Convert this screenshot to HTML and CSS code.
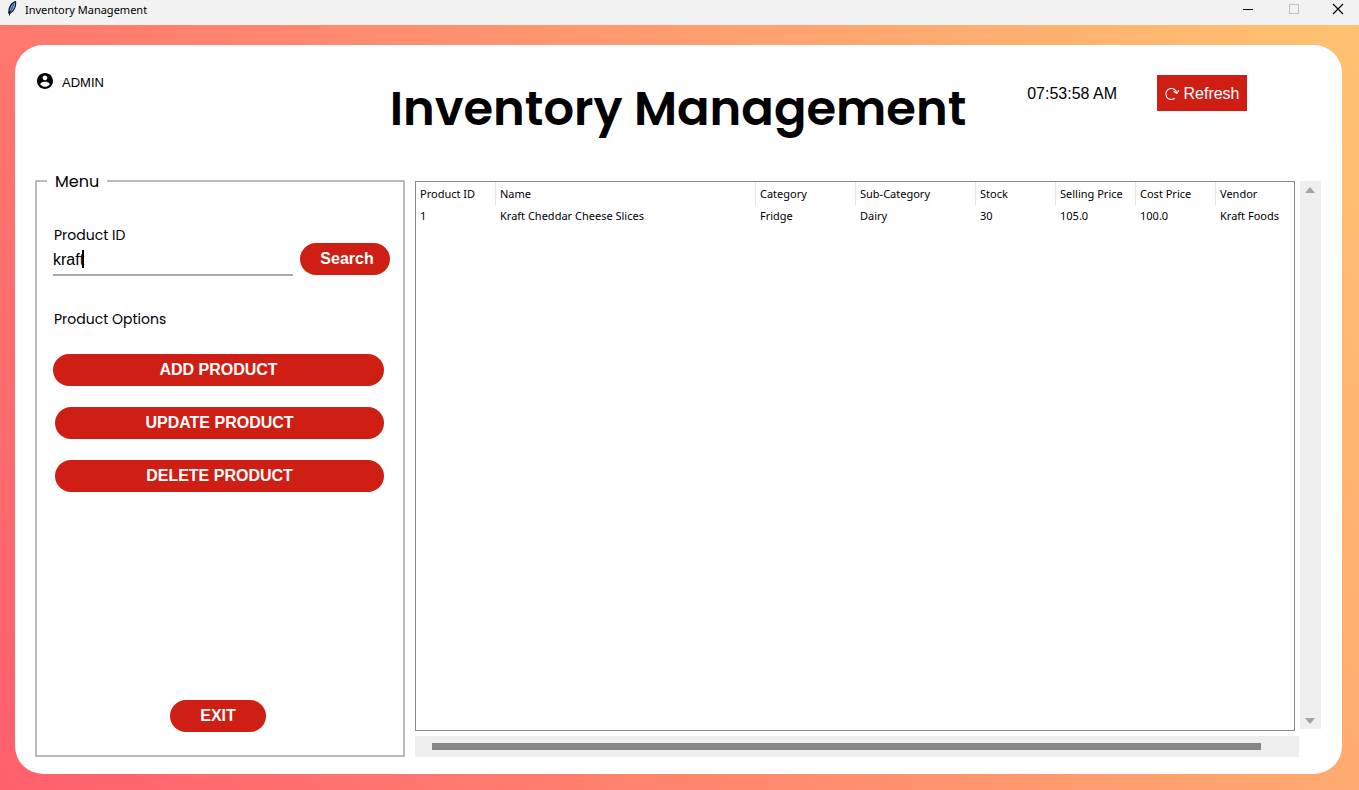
FILE: index.html
```html
<!DOCTYPE html>
<html lang="en">
<head>
<meta charset="utf-8">
<title>Inventory Management</title>
<link rel="stylesheet" href="styles.css">
</head>
<body>
<header class="titlebar">
  <svg class="feather" viewBox="0 0 10 18" aria-hidden="true">
    <path d="M9 1C5 1.500 1.500 6 1.500 10.500L1 13L2 14V16.500L3.500 13.500C7.500 11.500 10 6 9 1Z" fill="#0b1730"/>
    <path d="M8 2.200C5 4 3 7 2.600 11L4 12C7 9.500 8.600 6 8 2.200Z" fill="#7aa5d8"/>
    <path d="M7 4L3 12.500" stroke="#1d3a66" stroke-width=".8" fill="none"/>
  </svg>
  <span class="titlebar-text">Inventory Management</span>
  <div class="window-controls">
    <button class="window-btn" aria-label="Minimize"><svg viewBox="0 0 12 12"><path d="M1 6.500H11" stroke="#000"/></svg></button>
    <button class="window-btn" aria-label="Maximize" disabled><svg viewBox="0 0 12 12"><rect x="1.500" y="1.500" width="9" height="9" stroke="#c0c0c0" fill="none"/></svg></button>
    <button class="window-btn" aria-label="Close"><svg viewBox="0 0 12 12"><path d="M1 1L11 11M11 1L1 11" stroke="#000" stroke-width="1.200"/></svg></button>
  </div>
</header>
<main class="stage">
  <div class="card">
    <div class="card-head">
      <div class="user">
        <svg class="user-icon" viewBox="2 2 20 20" aria-hidden="true"><path d="M12 2C6.480 2 2 6.480 2 12s4.480 10 10 10 10-4.480 10-10S17.520 2 12 2zm0 3c1.660 0 3 1.340 3 3s-1.340 3-3 3-3-1.340-3-3 1.340-3 3-3zm0 14.200c-2.500 0-4.710-1.280-6-3.220.03-1.990 4-3.080 6-3.080 1.990 0 5.970 1.090 6 3.080-1.290 1.940-3.500 3.220-6 3.220z"/></svg>
        <span>ADMIN</span>
      </div>
      <h1 class="title">Inventory Management</h1>
      <div class="head-tools">
        <time class="clock">07:53:58 AM</time>
        <button class="refresh">
          <svg class="refresh-icon" viewBox="0 0 16 16" aria-hidden="true"><path d="M10.800 12.300A5.500 5.500 0 1 1 12.800 7.200M9.600 5.200L12.800 7.400L15 4.200" fill="none" stroke="#fff" stroke-width="1.100"/></svg>
          Refresh
        </button>
      </div>
    </div>
    <div class="content">
      <fieldset class="menu">
        <legend class="menu-legend">Menu</legend>
        <form class="search">
          <div class="field">
            <label class="label" for="product-id">Product ID</label>
            <input class="input" id="product-id" type="text" value="kraft">
          </div>
          <button class="pill pill-search" type="button">Search</button>
        </form>
        <h2 class="label options-label">Product Options</h2>
        <div class="options">
          <button class="pill pill-wide">ADD PRODUCT</button>
          <button class="pill">UPDATE PRODUCT</button>
          <button class="pill">DELETE PRODUCT</button>
        </div>
        <button class="pill pill-exit">EXIT</button>
      </fieldset>
      <section class="results">
        <div class="table-box">
          <table class="table">
            <colgroup><col class="w-first"><col class="w-name"><col class="w-cat"><col class="w-sub"><col class="w-m"><col class="w-m"><col class="w-m"><col class="w-last"></colgroup>
            <thead>
              <tr><th>Product ID</th><th>Name</th><th>Category</th><th>Sub-Category</th><th>Stock</th><th>Selling Price</th><th>Cost Price</th><th>Vendor</th></tr>
            </thead>
            <tbody>
              <tr><td>1</td><td>Kraft Cheddar Cheese Slices</td><td>Fridge</td><td>Dairy</td><td>30</td><td>105.0</td><td>100.0</td><td>Kraft Foods</td></tr>
            </tbody>
          </table>
        </div>
        <div class="scroll-y" aria-hidden="true"><span class="arrow-up"></span><span class="arrow-down"></span></div>
        <div class="scroll-x" aria-hidden="true"><span class="thumb"></span></div>
      </section>
    </div>
  </div>
</main>
</body>
</html>
```
FILE: styles.css
```css
* { box-sizing: border-box; }

body {
  margin: 0;
  min-height: 100vh;
  display: flex;
  flex-direction: column;
  font-family: "Liberation Sans", Arial, sans-serif;
  font-size: 16px;
  color: #000;
}

button { font: inherit; border: 0; padding: 0; cursor: pointer; }

.titlebar {
  height: 25px;
  display: flex;
  align-items: flex-start;
  background: #f2f2f2;
  padding-left: 7px;
}
.feather { width: 10px; height: 18px; }
.titlebar-text {
  margin-left: 8px;
  font: 11px/20px "Segoe UI", "Noto Sans", sans-serif;
}
.window-controls { margin-left: auto; display: flex; }
.window-btn { width: 46px; height: 18px; background: none; display: grid; place-items: center; }
.window-btn:last-child { width: 42px; }
.window-btn svg { width: 12px; height: 12px; }

.stage {
  flex: 1;
  display: flex;
  padding: 20px 17px 16px 15px;
  background: linear-gradient(60deg, #ff5f6d, #ffc371);
}
.card {
  flex: 1;
  display: flex;
  flex-direction: column;
  background: #fff;
  border-radius: 28px;
  padding: 0 21px 17px 20px;
}
.card-head {
  display: grid;
  grid-template-columns: 1fr auto 1fr;
  padding-top: 28px;
  height: 126px;
}
.user { display: flex; gap: 9px; padding-left: 2px; font-size: 13px; line-height: 20px; }
.user-icon { width: 16px; height: 16px; }
.title {
  margin: 0;
  font: 600 48px/72px Poppins, Inter, sans-serif;
  white-space: nowrap;
}
.head-tools { display: flex; justify-content: flex-end; align-items: flex-start; gap: 40px; padding: 2px 74px 0 0; }
.clock { line-height: 38px; }
.refresh {
  display: flex;
  align-items: center;
  justify-content: center;
  gap: 3px;
  width: 90px;
  height: 36px;
  padding-top: 2px;
  background: #cf1f14;
  color: #fff;
}
.refresh-icon { width: 16px; height: 16px; }

.content { flex: 1; display: flex; gap: 10px; }

.menu {
  display: flex;
  flex-direction: column;
  width: 370px;
  margin: 0;
  padding: 34px 13px 23px 16px;
  border: 2px solid #bbb;
}
.menu-legend { margin-left: -6px; padding: 2px 8px 0; font: 16px/18px Poppins, Inter, sans-serif; }
.search { display: flex; align-items: flex-end; justify-content: space-between; }
.field { display: flex; flex-direction: column; width: 240px; }
.label { margin: 0; padding-left: 1px; font: 14px/20px Poppins, Inter, sans-serif; }
.input {
  width: 100%;
  height: 31px;
  padding: 0;
  border: 0;
  border-bottom: 2px solid #aaa;
  outline: 0;
  font: inherit;
  background: linear-gradient(#000, #000) 29px 5px / 2px 18px no-repeat;
}
.pill {
  height: 32px;
  border-radius: 16px;
  background: #cf1f14;
  color: #fff;
  font-weight: 700;
}
.pill-search { width: 90px; margin-bottom: 1px; padding-left: 4px; }
.options-label { margin-top: 33px; }
.options { display: flex; flex-direction: column; gap: 21px; margin-top: 25px; padding: 0 6px 0 2px; }
.pill-wide { margin-left: -2px; }
.pill-exit { width: 96px; margin: auto auto 0 117px; }

.results {
  flex: 1;
  display: grid;
  grid-template-columns: 1fr 4px 22px;
  grid-template-rows: 1fr 21px;
  row-gap: 5px;
  padding-top: 10px;
}
.table-box { border: 1px solid #828790; }
.table {
  width: 100%;
  table-layout: fixed;
  border-collapse: separate;
  border-spacing: 0;
  font: 11px/20px "Segoe UI", "Noto Sans", sans-serif;
}
.table th, .table td { padding: 0 0 0 4px; text-align: left; font-weight: 400; white-space: nowrap; }
.table th { height: 24px; border-right: 1px solid #e5e5e5; }
.table th:last-child { border-right: 0; }
.w-first, .w-m { width: 80px; }
.w-name { width: 260px; }
.w-cat { width: 100px; }
.w-sub { width: 120px; }
.w-last { width: 78px; }

.scroll-y {
  grid-column: 3;
  margin: 0 0 2px 1px;
  background: #efefef;
  display: flex;
  flex-direction: column;
  justify-content: space-between;
  align-items: center;
  padding: 6px 2px 5px 0;
}
.arrow-up, .arrow-down { border: 5px solid transparent; border-top-width: 0; border-bottom: 6px solid #a3a3a3; }
.arrow-down { transform: rotate(180deg); }
.scroll-x { grid-column: 1 / 3; background: #efefef; padding: 7px 38px 7px 17px; display: flex; }
.thumb { flex: 1; background: #868686; }
```
